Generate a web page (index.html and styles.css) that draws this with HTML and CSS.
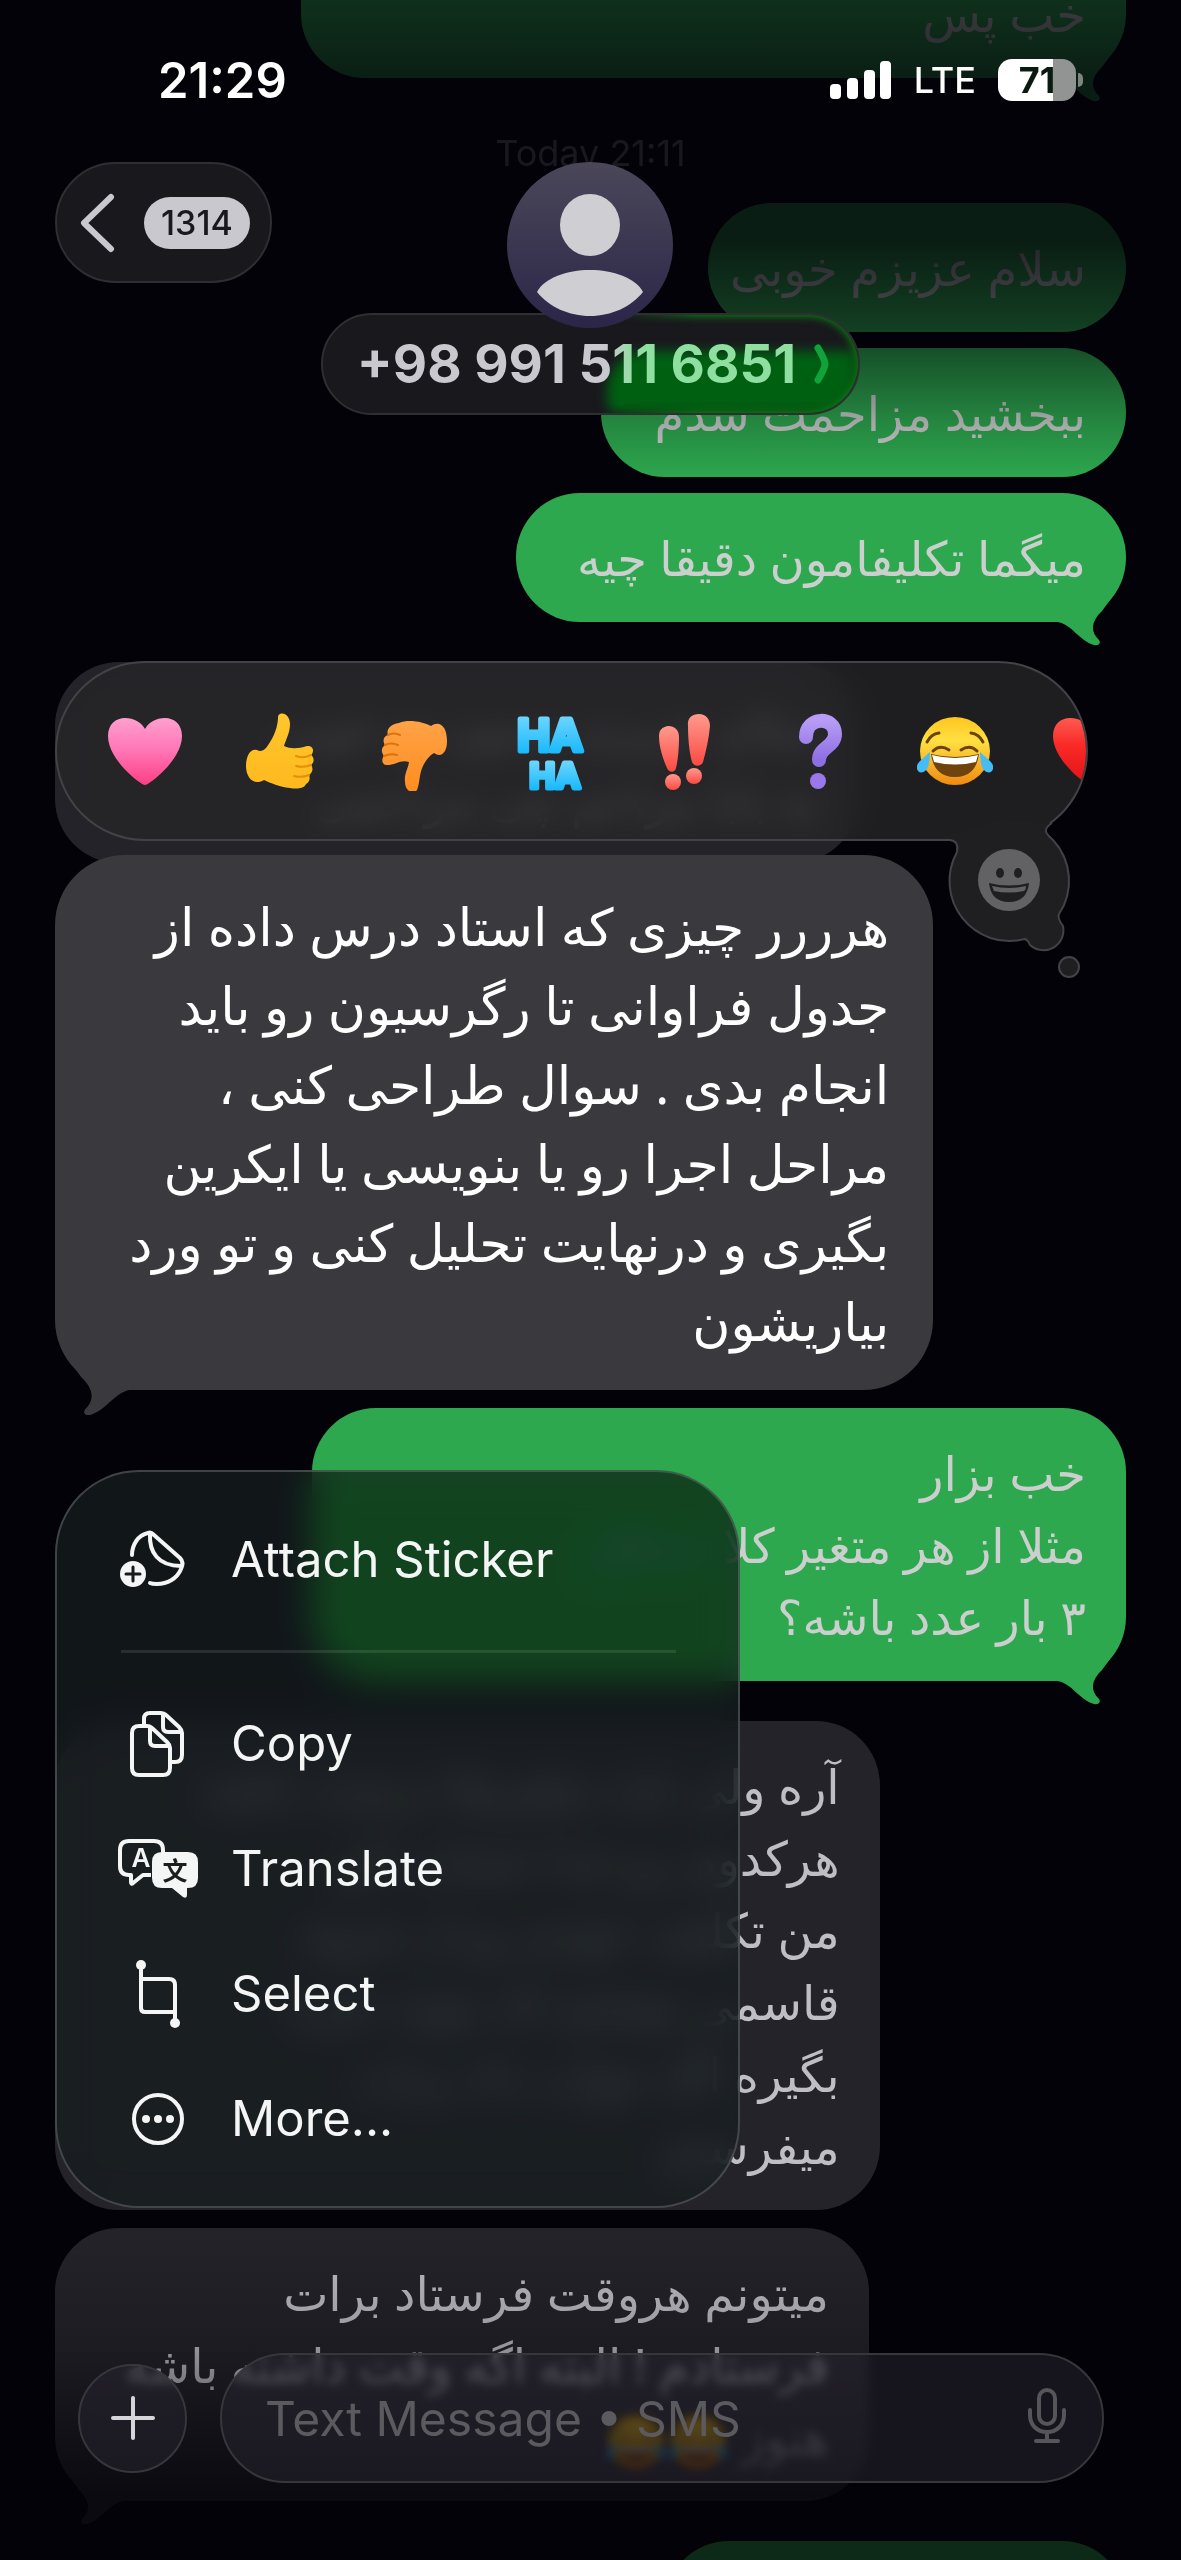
FILE: index.html
```html
<!doctype html>
<html lang="en">
<head>
	<meta charset="UTF-8">
	<meta name="viewport" content="width=device-width, initial-scale=1">
	<title>+98 991 511 6851</title>
	<link rel="stylesheet" href="styles.css">
</head>
<body>
	<svg class="defs" width="0" height="0" aria-hidden="true">
		<defs>
			<linearGradient id="pink" x1="0" y1="0" x2="0" y2="1"><stop offset="0" stop-color="#ff9fd0"/><stop offset=".5" stop-color="#ff74b4"/><stop offset="1" stop-color="#ff3f86"/></linearGradient>
			<linearGradient id="red" x1="0" y1="0" x2="0" y2="1"><stop offset="0" stop-color="#ff5a50"/><stop offset=".4" stop-color="#f92a27"/><stop offset="1" stop-color="#e01315"/></linearGradient>
			<linearGradient id="yellow" x1="0" y1="0" x2="0" y2="1"><stop offset="0" stop-color="#ffc62e"/><stop offset="1" stop-color="#ffb91e"/></linearGradient>
			<linearGradient id="orange" x1="0" y1="0" x2="0" y2="1"><stop offset="0" stop-color="#ffa247"/><stop offset="1" stop-color="#ff8d1e"/></linearGradient>
			<linearGradient id="blue" x1="0" y1="0" x2="0" y2="1"><stop offset="0" stop-color="#7fdcff"/><stop offset="1" stop-color="#06b2fb"/></linearGradient>
			<linearGradient id="coral" x1="0" y1="0" x2="0" y2="1"><stop offset="0" stop-color="#ff9a8e"/><stop offset="1" stop-color="#fb4a42"/></linearGradient>
			<linearGradient id="violet" x1="0" y1="0" x2="0" y2="1"><stop offset="0" stop-color="#b79bf5"/><stop offset="1" stop-color="#8d6fe4"/></linearGradient>
			<linearGradient id="smiley" x1="0" y1="0" x2="0" y2="1"><stop offset="0" stop-color="#ffc51e"/><stop offset=".35" stop-color="#ffe042"/><stop offset="1" stop-color="#f08a10"/></linearGradient>
		</defs>
		<symbol id="tail" viewBox="0 0 76 64">
			<path d="M7 40C22 42 28 58 44 63C49 64 51 61 49 58C40 50 41 39 52 29L60 18L30 10L0 40Z"/>
		</symbol>
		<symbol id="heart" viewBox="0 0 80 80">
			<path d="M40 74C36 74 3 49 3 25C3 13 11 7 20 7C29 7 36 11 40 18C44 11 51 7 60 7C69 7 77 13 77 25C77 49 44 74 40 74Z"/>
		</symbol>
		<symbol id="joy" viewBox="0 0 80 80">
			<ellipse cx="40" cy="40" rx="35" ry="34" fill="url(#smiley)"/>
			<path d="M12 31Q16 23 24 22M68 31Q64 23 56 22" fill="none" stroke="#6b4208" stroke-width="3" stroke-linecap="round"/>
			<path d="M18 40Q25 33 34 39M62 40Q55 33 46 39" fill="none" stroke="#6b4208" stroke-width="3" stroke-linecap="round"/>
			<path d="M16 43Q40 49 64 43Q61 66 40 66Q19 66 16 43Z" fill="#6f430c"/>
			<path d="M17 44Q40 50 63 44L61 51Q40 56 19 51Z" fill="#fff"/>
			<path d="M15 41Q15 52 12 58Q7 64 3 60Q0 55 5 50Z" fill="#45bdf4"/>
			<path d="M65 41Q65 52 68 58Q73 64 77 60Q80 55 75 50Z" fill="#45bdf4"/>
		</symbol>
	</svg>

	<div class="screen">
		<main class="thread">
			<div class="bubble out first" dir="rtl">خب پس<svg class="tail" aria-hidden="true"><use href="#tail"/></svg></div>
			<time class="stamp">Today 21:11</time>
			<div class="bubble out w39" dir="rtl">سلام عزیزم خوبی</div>
			<div class="bubble out w49 near" dir="rtl">ببخشید مزاحمت شدم</div>
			<div class="bubble out w57 near" dir="rtl">میگما تکلیفامون دقیقا چیه<svg class="tail" aria-hidden="true"><use href="#tail"/></svg></div>
			<div class="bubble in w75 far" dir="rtl">سلام عزیزم ممنون تو خوبی<br>نه بابا مزاحم چی مراحمی</div>

			<section class="focus">
				<div class="reactions">
					<div class="reaction-bar">
						<button class="reaction" aria-label="Heart"><svg viewBox="0 0 80 80" fill="url(#pink)"><use href="#heart"/></svg></button>
						<button class="reaction" aria-label="Thumbs up"><svg viewBox="0 0 80 80"><path d="M40 3C45 1 50 6 50 13C50 22 46 28 44 35C50 38 58 38 67 35C73 34 75 40 71 44C75 47 74 52 71 54C74 58 72 62 69 64C71 69 68 72 66 73C64 78 56 78 50 77C39 76 31 72 24 69C14 75 6 67 6 55C6 44 11 37 17 39C20 41 23 40 26 37C32 29 37 20 38 8C38 5 38 4 40 3Z" fill="url(#yellow)"/><path d="M56 45Q63 48 71 44M56 55Q63 57 71 54M54 65Q61 67 69 64" fill="none" stroke="#e58f0a" stroke-width="2" stroke-linecap="round"/></svg></button>
						<button class="reaction" aria-label="Thumbs down"><svg viewBox="0 0 80 80"><path d="M24 12C34 8 48 11 56 15C65 9 72 16 72 30C72 42 66 47 59 42C55 44 51 49 48 55C44 63 45 72 42 79C38 84 30 80 30 71C29 63 33 58 34 51C26 48 20 54 12 54C7 54 6 48 9 45C6 41 6 37 10 34C7 29 9 25 13 24C11 19 15 13 24 12Z" fill="url(#orange)"/><path d="M10 34Q16 31 23 34M9 45Q16 42 22 44M13 24Q19 21 25 24" fill="none" stroke="#d9730c" stroke-width="2" stroke-linecap="round"/></svg></button>
						<button class="reaction" aria-label="Ha ha"><svg class="haha" viewBox="0 0 80 80" fill="url(#blue)" stroke="url(#blue)" stroke-width="5" stroke-linejoin="round"><text x="40" y="40" font-size="44">HA</text><text x="45" y="77" font-size="34">HA</text></svg></button>
						<button class="reaction" aria-label="Emphasize"><svg viewBox="0 0 80 80" fill="url(#coral)"><path d="M14 25C14 19 17 16 23 15C30 15 34 19 34 26C34 37 33 49 31 57C30 62 24 62 22 57C18 48 14 36 14 25Z"/><path d="M43 15C42 7 47 3 54 3C61 3 65 8 65 15C64 27 61 40 58 51C56 56 49 56 47 51C44 40 43 26 43 15Z"/><circle cx="28" cy="71" r="8"/><circle cx="49" cy="65" r="8"/></svg></button>
						<button class="reaction" aria-label="Question"><svg viewBox="0 0 80 80"><path d="M26 26C26 5 55 5 55 23C55 36 39 36 39 49" fill="none" stroke="url(#violet)" stroke-width="14" stroke-linecap="round"/><circle cx="38" cy="70" r="8" fill="#9878ea"/></svg></button>
						<button class="reaction" aria-label="Tears of joy"><svg><use href="#joy"/></svg></button>
						<button class="reaction" aria-label="Red heart"><svg viewBox="0 0 80 80" fill="url(#red)"><use href="#heart"/></svg></button>
					</div>
					<svg class="thought" viewBox="0 0 150 185" aria-hidden="true">
						<path d="M4 41H10Q19 42 17 52A60 60 0 0 0 85 139Q88 140 90 145A20 20 0 0 0 123 126Q117 118 119 114A60 60 0 0 0 113 40Q105 33 106 30Q106 27 112 23L60 20L4 36Z" fill="#1f1f22"/>
						<path d="M4 40H10Q19 41 17 52A60 60 0 0 0 85 139Q88 140 90 145A20 20 0 0 0 123 126Q117 118 119 114A60 60 0 0 0 113 40Q105 33 106 30Q106 27 112 23" fill="none" stroke="#434347" stroke-width="2"/>
						<circle cx="129" cy="167" r="10" fill="#1f1f22" stroke="#434347" stroke-width="2"/>
						<circle cx="69" cy="80" r="31" fill="#626265"/>
						<ellipse cx="60" cy="73" rx="4" ry="5" fill="#1f1f22"/>
						<ellipse cx="78" cy="73" rx="4" ry="5" fill="#1f1f22"/>
						<path d="M49 83Q69 88 89 83Q87 102 69 102Q51 102 49 83Z" fill="#1f1f22"/>
						<path d="M52 86Q69 90 86 86Q86 90 84 91Q69 94 54 91Z" fill="#626265"/>
					</svg>
				</div>

				<div class="bubble in selected" dir="rtl">هرررر چیزی که استاد درس داده از<br>جدول فراوانی تا رگرسیون رو باید<br>انجام بدی . سوال طراحی کنی ،<br>مراحل اجرا رو یا بنویسی یا ایکرین<br>بگیری و درنهایت تحلیل کنی و تو ورد<br>بیاریشون<svg class="tail" aria-hidden="true"><use href="#tail"/></svg></div>

				<div class="menu">
					<button class="menu-item">
						<svg class="icon" viewBox="0 0 82 72" fill="none" stroke="#f4f5f5" stroke-width="4" stroke-linejoin="round" stroke-linecap="round"><path d="M15 31C15 21 21 11 31 9C33 8 35 9 37 11L63 34C66 37 66 41 64 45C60 55 50 60 40 60C37 60 35 60 33 59"/><path d="M33 10C32 28 41 42 64 42"/><circle cx="16" cy="50" r="13" fill="#f4f5f5" stroke="none"/><path d="M16 43V57M9 50H23" stroke="#17191b" stroke-width="3"/></svg>
						Attach Sticker
					</button>
					<hr class="rule">
					<button class="menu-item">
						<svg class="icon" viewBox="0 0 82 72" fill="none" stroke="#f4f5f5" stroke-width="4" stroke-linejoin="round"><path d="M27 16V11Q27 5 33 5H44Q47 5 49 7L62 19Q65 22 65 25V47Q65 54 58 54H54"/><path d="M46 6V19Q46 24 51 24H64"/><path d="M22 18H30Q33 18 35 20L50 34Q53 37 53 40V60Q53 67 46 67H22Q15 67 15 60V25Q15 18 22 18Z"/><path d="M33 19V33Q33 38 38 38H52"/></svg>
						Copy
					</button>
					<button class="menu-item">
						<svg class="icon" viewBox="0 0 82 72"><path d="M34 42H26L16 50Q14 52 14 49V42H12Q3 42 3 33V17Q3 8 12 8H37Q46 8 46 17V20" fill="none" stroke="#f4f5f5" stroke-width="4" stroke-linejoin="round"/><path d="M45 19H71Q81 19 81 29V45Q81 55 71 55H70V62Q70 66 66 64L55 55H45Q35 55 35 45V29Q35 19 45 19Z" fill="#f4f5f5"/><text class="glyph" x="24" y="34" font-size="26" fill="#f4f5f5">A</text><text class="glyph" x="58" y="47" font-size="25" fill="#1b1d1f">文</text></svg>
						Translate
					</button>
					<button class="menu-item">
						<svg class="icon" viewBox="0 0 82 72" fill="none" stroke="#f4f5f5" stroke-width="4"><path d="M24 7V50Q24 54 28 54H58"/><path d="M24 21H52Q58 21 58 27V66"/><circle cx="24" cy="7" r="5" fill="#f4f5f5" stroke="none"/><circle cx="58" cy="65" r="5" fill="#f4f5f5" stroke="none"/></svg>
						Select
					</button>
					<button class="menu-item">
						<svg class="icon" viewBox="0 0 82 72" fill="none"><circle cx="41" cy="36" r="24" stroke="#f4f5f5" stroke-width="4"/><g fill="#f4f5f5"><circle cx="29" cy="36" r="4"/><circle cx="41" cy="36" r="4"/><circle cx="53" cy="36" r="4"/></g></svg>
						More...
					</button>
				</div>
			</section>

			<div class="bubble out w76 after" dir="rtl">خب بزار<br>مثلا از هر متغیر کلا حداقل<br>۳ بار عدد باشه؟<svg class="tail" aria-hidden="true"><use href="#tail"/></svg></div>
			<div class="bubble in w77 far" dir="rtl">آره ولی باید متغیرها درست باشه<br>هرکدوم رو جدا حساب کن<br>من تکلیف خودم رو از جزوه<br>قاسمی نوشتم که بتونه نمره<br>بگیره اگه جواب داد برات<br>میفرستم</div>
			<div class="bubble in w76 after" dir="rtl">میتونم هروقت فرستاد برات<br>فرستادم ! البته اگه وقت داشته باشه<br>هنوز <svg class="emoji"><use href="#joy"/></svg><svg class="emoji"><use href="#joy"/></svg><svg class="tail" aria-hidden="true"><use href="#tail"/></svg></div>
			<div class="bubble out w43 far" dir="rtl">مرسی عزیزم</div>
		</main>

		<div class="shade top"></div>
		<div class="shade bottom"></div>

		<header class="header">
			<div class="status">
				<span class="clock">21:29</span>
				<div class="signals">
					<svg class="bars" viewBox="0 0 62 38" fill="#fff" aria-hidden="true"><rect x="0" y="23" width="11" height="15" rx="4"/><rect x="17" y="17" width="11" height="21" rx="4"/><rect x="34" y="9" width="11" height="29" rx="4"/><rect x="50" y="0" width="11" height="38" rx="4"/></svg>
					<span class="carrier">LTE</span>
					<span class="battery">71</span>
				</div>
			</div>
			<div class="nav">
				<button class="back">
					<svg width="36" height="60" viewBox="0 0 36 60" fill="none" stroke="#c9c8cf" stroke-width="6" stroke-linecap="round" stroke-linejoin="round" aria-hidden="true"><path d="M31 4L4 30L31 56"/></svg>
					<span class="count">1314</span>
				</button>
				<div class="contact">
					<svg class="avatar" viewBox="0 0 166 166" aria-hidden="true"><defs><linearGradient id="av" x1="0" y1="0" x2="0" y2="1"><stop offset="0" stop-color="#4b4759"/><stop offset="1" stop-color="#2b2648"/></linearGradient></defs><circle cx="83" cy="83" r="83" fill="url(#av)"/><ellipse cx="83" cy="63" rx="30" ry="31" fill="#cfced3"/><path d="M30 130C37 116 60 108 83 108C106 108 129 116 136 130C124 145 104 154 83 154C62 154 42 145 30 130Z" fill="#cfced3"/></svg>
					<button class="number">
						<span class="digits">+98 991 511 6851</span>
						<svg width="16" height="40" viewBox="0 0 16 40" fill="none" stroke="#0fa33a" stroke-width="7" stroke-linecap="round" stroke-linejoin="round" aria-hidden="true"><path d="M4 4Q11 16 11 20Q11 24 4 36"/></svg>
					</button>
				</div>
			</div>
		</header>

		<form class="composer">
			<button class="plus" type="button" aria-label="Add attachment"><svg width="44" height="44" viewBox="0 0 44 44" fill="none" stroke="#d6d5da" stroke-width="4" stroke-linecap="round"><path d="M22 2V42M2 22H42"/></svg></button>
			<div class="field">
				<input class="entry" type="text" aria-label="Message" placeholder="Text Message • SMS">
				<button class="mic" type="button" aria-label="Dictate"><svg width="38" height="56" viewBox="0 0 38 56" fill="none" stroke="#55555a" stroke-width="4" stroke-linecap="round"><rect x="11" y="2" width="16" height="34" rx="8"/><path d="M2 22V27C2 37 9 44 19 44C29 44 36 37 36 27V22M19 44V53M8 53H30"/></svg></button>
			</div>
		</form>
	</div>
</body>
</html>
```
FILE: styles.css
```css
*{
	margin: 0;
	padding: 0;
	box-sizing: border-box;
}
body{
	background: #030208;
	font-family: Inter, "Liberation Sans", sans-serif;
}
button{
	border: 0;
	background: none;
	color: inherit;
	font: inherit;
	cursor: pointer;
}
.defs{
	position: absolute;
}
.screen{
	position: relative;
	height: 100vh;
	overflow: hidden;
}

/* thread */
.thread{
	display: flex;
	flex-direction: column;
	padding: 0 55px;
}
.bubble{
	position: relative;
	flex: none;
	padding: 29px 40px 28px;
	border-radius: 64px;
	font-family: "Noto Sans", "DejaVu Sans", sans-serif;
	font-size: 48px;
	line-height: 72px;
	white-space: nowrap;
}
.out{
	align-self: flex-end;
	background: #2da84e;
	color: #cbcfcd;
	fill: #2da84e;
}
.in{
	align-self: flex-start;
	background: #242329;
	color: #bfbec5;
	fill: #242329;
}
.tail{
	position: absolute;
	right: 0;
	bottom: -24px;
	width: 76px;
	height: 64px;
}
.in .tail{
	right: auto;
	left: 0;
	transform: scaleX(-1);
}
.first{
	width: 77%;
	margin-top: -51px;
	border-top-left-radius: 0;
	border-top-right-radius: 0;
}
.near{ margin-top: 16px; }
.after{ margin-top: 18px; }
.far{ margin-top: 40px; }
.w39{ width: 39%; }
.w43{ width: 43%; }
.w49{ width: 49%; }
.w57{ width: 57%; }
.w75{ width: 75%; }
.w76{ width: 76%; }
.w77{ width: 77%; }
.stamp{
	padding: 57px 0 32px;
	font-size: 36px;
	line-height: 36px;
	text-align: center;
	color: #8a8a90;
}
.emoji{
	width: 62px;
	height: 62px;
	vertical-align: middle;
}

/* held message */
.focus{
	position: relative;
	z-index: 2;
	margin-top: -8px;
}
.selected{
	width: 82%;
	padding: 31px 44px 30px;
	border-radius: 70px;
	background: #3a393e;
	color: #fff;
	fill: #3a393e;
	font-size: 52px;
	line-height: 79px;
}
.selected .tail{
	bottom: -26px;
	width: 84px;
	height: 70px;
}
.reactions{
	position: absolute;
	left: 0;
	right: 38px;
	bottom: calc(100% + 14px);
}
.reaction-bar{
	display: flex;
	height: 180px;
	padding-left: 20px;
	overflow: hidden;
	border: 2px solid #434347;
	border-radius: 90px;
	background: rgba(37, 38, 40, 0.8);
	-webkit-backdrop-filter: blur(14px);
	backdrop-filter: blur(14px);
}
.reaction{
	flex: none;
	display: flex;
	align-items: center;
	justify-content: center;
	width: 135px;
}
.reaction svg{
	width: 80px;
	height: 80px;
}
.haha{
	font-family: Inter, sans-serif;
	font-weight: 700;
	text-anchor: middle;
}
.thought{
	position: absolute;
	right: -2px;
	top: 139px;
	width: 150px;
	height: 185px;
}
.menu{
	position: absolute;
	top: calc(100% + 80px);
	left: 0;
	width: 64%;
	padding: 25px 0;
	border: 2px solid rgba(120, 122, 130, 0.45);
	border-radius: 84px;
	background: rgba(23, 29, 30, 0.76);
	-webkit-backdrop-filter: blur(18px) saturate(1.8);
	backdrop-filter: blur(18px) saturate(1.8);
	color: #f4f5f5;
}
.menu-item{
	display: flex;
	align-items: center;
	gap: 32px;
	width: 100%;
	height: 125px;
	padding-left: 60px;
	font-size: 49px;
	text-align: left;
}
.icon{
	width: 82px;
	height: 72px;
}
.glyph{
	font-family: Inter, "Noto Sans CJK SC", sans-serif;
	font-weight: 600;
	text-anchor: middle;
}
.rule{
	height: 3px;
	margin: 28px 62px 28px 64px;
	border: 0;
	background: rgba(255, 255, 255, 0.1);
}

/* fades under the bars */
.shade{
	position: absolute;
	left: 0;
	right: 0;
	pointer-events: none;
}
.top{
	top: 0;
	height: 480px;
	background: linear-gradient(rgba(3, 2, 8, 0.72), rgba(3, 2, 8, 0.84) 18%, rgba(3, 2, 8, 0.84) 50%, rgba(3, 2, 8, 0.64) 68%, rgba(3, 2, 8, 0.2) 88%, rgba(3, 2, 8, 0));
}
.bottom{
	bottom: 0;
	height: 330px;
	background: linear-gradient(rgba(3, 2, 8, 0), rgba(3, 2, 8, 0.2) 33%, rgba(3, 2, 8, 0.76) 80%, rgba(3, 2, 8, 0.76));
}

/* header */
.header{
	position: absolute;
	top: 0;
	left: 0;
	right: 0;
	padding-top: 46px;
	color: #fff;
}
.status{
	display: flex;
	align-items: center;
	justify-content: space-between;
	height: 68px;
	margin-bottom: 48px;
	padding: 0 105px 0 158px;
}
.clock{
	font-size: 49px;
	font-weight: 600;
}
.signals{
	display: flex;
	align-items: center;
	gap: 22px;
}
.bars{
	width: 62px;
	height: 38px;
}
.carrier{
	font-size: 36px;
	font-weight: 500;
}
.battery{
	position: relative;
	width: 78px;
	height: 42px;
	border-radius: 14px;
	background: linear-gradient(90deg, #fff 71%, #929493 71%);
	color: #0b1a10;
	font-size: 36px;
	font-weight: 700;
	line-height: 42px;
	text-align: center;
}
.battery::after{
	content: "";
	position: absolute;
	right: -7px;
	top: 14px;
	width: 5px;
	height: 14px;
	border-radius: 0 5px 5px 0;
	background: #7d8580;
}
.nav{
	display: grid;
	grid-template-columns: 1fr auto 1fr;
	align-items: start;
	padding: 0 55px;
}
.back{
	display: flex;
	align-items: center;
	justify-self: start;
	gap: 28px;
	height: 121px;
	padding: 0 20px 0 23px;
	border: 2px solid #2e2e33;
	border-radius: 61px;
	background: #19181d;
}
.count{
	padding: 0 17px;
	border-radius: 26px;
	background: #c9c8cf;
	color: #19181d;
	font-size: 34px;
	font-weight: 500;
	line-height: 52px;
}
.contact{
	display: flex;
	flex-direction: column;
	align-items: center;
}
.avatar{
	position: relative;
	z-index: 1;
	width: 166px;
	height: 166px;
	margin-bottom: -15px;
}
.number{
	position: relative;
	display: flex;
	align-items: center;
	gap: 18px;
	height: 102px;
	padding: 0 28px 0 34px;
	overflow: hidden;
	border: 2px solid #2e2e33;
	border-radius: 51px;
	background: #19181d;
}
.number::before{
	content: "";
	position: absolute;
	left: 53%;
	right: 2px;
	top: 36px;
	bottom: 0;
	border-radius: 40px 0 40px 10px;
	background: #006012;
	filter: blur(6px);
}
.number::after{
	content: "";
	position: absolute;
	inset: -2px;
	border-radius: 51px;
	box-shadow: inset 0 0 8px 3px #0a8a12;
	-webkit-mask-image: linear-gradient(90deg, transparent 55%, #000 70%);
	mask-image: linear-gradient(90deg, transparent 55%, #000 70%);
}
.digits{
	position: relative;
	background: linear-gradient(90deg, #c9c8cf 57%, #8fe0a0 63%);
	-webkit-background-clip: text;
	background-clip: text;
	color: transparent;
	font-size: 53px;
	font-weight: 700;
}
.number svg{
	position: relative;
}

/* composer */
.composer{
	position: absolute;
	left: 78px;
	right: 77px;
	bottom: 77px;
	display: flex;
	align-items: center;
	gap: 33px;
}
.plus,
.field{
	display: flex;
	align-items: center;
	border: 2px solid #36363b;
	background: rgba(32, 31, 37, 0.66);
	-webkit-backdrop-filter: blur(5px) saturate(1.8) brightness(1.3);
	backdrop-filter: blur(5px) saturate(1.8) brightness(1.3);
}
.plus{
	flex: none;
	justify-content: center;
	width: 109px;
	height: 109px;
	border-radius: 55px;
}
.field{
	flex: 1;
	height: 130px;
	padding: 0 36px 0 43px;
	border-radius: 65px;
}
.entry{
	flex: 1;
	min-width: 0;
	border: 0;
	outline: 0;
	background: none;
	color: #fff;
	font: 400 48px Inter, "Liberation Sans", sans-serif;
}
.entry::placeholder{
	color: #5a5a5f;
	opacity: 1;
}
```
